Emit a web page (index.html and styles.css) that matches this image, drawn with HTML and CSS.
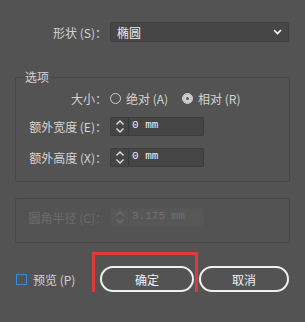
FILE: index.html
```html
<!DOCTYPE html>
<html lang="zh-CN">
<head>
    <meta charset="UTF-8">
    <title>椭圆选项</title>
    <link rel="stylesheet" href="styles.css">
</head>
<body>
<div class="dialog">
    <div class="row shape-row">
        <label class="lbl">形状 (S)：</label>
        <div class="select">
            <span>椭圆</span>
            <svg width="9" height="6" viewBox="0 0 9 6"><path d="M1 1l3.5 3.5L8 1" stroke="#fff" stroke-width="1.6" fill="none"/></svg>
        </div>
    </div>

    <fieldset class="group">
        <legend>选项</legend>
        <div class="row radio-row">
            <span class="lbl">大小：</span>
            <span class="radio"></span><span class="opt">绝对 (A)</span>
            <span class="radio on"></span><span class="opt">相对 (R)</span>
        </div>
        <div class="row field-row">
            <span class="lbl">额外宽度 (E)：</span>
            <div class="num">
                <span class="spin"><svg width="10" height="17" viewBox="0 0 10 17"><path d="M1.5 6.5L5 3l3.5 3.5M1.5 10.5L5 14l3.5-3.5" stroke="#e6e6e6" stroke-width="1.3" fill="none"/></svg></span>
                <span class="val">0 mm</span>
            </div>
        </div>
        <div class="row field-row second">
            <span class="lbl">额外高度 (X)：</span>
            <div class="num">
                <span class="spin"><svg width="10" height="17" viewBox="0 0 10 17"><path d="M1.5 6.5L5 3l3.5 3.5M1.5 10.5L5 14l3.5-3.5" stroke="#e6e6e6" stroke-width="1.3" fill="none"/></svg></span>
                <span class="val">0 mm</span>
            </div>
        </div>
    </fieldset>

    <fieldset class="group disabled">
        <div class="row field-row">
            <span class="lbl">圆角半径 (C)：</span>
            <div class="num">
                <span class="spin"><svg width="10" height="17" viewBox="0 0 10 17"><path d="M1.5 6.5L5 3l3.5 3.5M1.5 10.5L5 14l3.5-3.5" stroke="#6c6c6c" stroke-width="1.3" fill="none"/></svg></span>
                <span class="val">3.175 mm</span>
            </div>
        </div>
    </fieldset>

    <div class="row footer">
        <label class="check"><span class="box"></span>预览 (P)</label>
        <div class="ok-wrap">
            <button class="btn ok">确定</button>
            <span class="mark"></span>
        </div>
        <button class="btn cancel">取消</button>
    </div>
</div>
</body>
</html>
```

FILE: styles.css
```css
body {
    margin: 0;
    background: #535353;
    font-family: "Noto Sans CJK SC", sans-serif;
    font-size: 12px;
    color: #d4d4d4;
}

.dialog {
    width: 275px;
    padding: 22px 15px 0 15px;
}

.row {
    display: flex;
    align-items: center;
}

.lbl {
    box-sizing: border-box;
    width: 94px;
    padding-right: 3px;
    text-align: right;
    white-space: nowrap;
}

.shape-row {
    height: 20px;
}
.shape-row .lbl {
    width: 95px;
}

.select {
    box-sizing: border-box;
    width: 179px;
    height: 20px;
    display: flex;
    align-items: center;
    justify-content: space-between;
    padding: 0 6px 0 6px;
    background: #464646;
    border: 1px solid #3f3f3f;
    border-radius: 2px;
    color: #ececec;
}

.group {
    margin: 27px 0 0 0;
    padding: 3px 0 14px 0;
    border: 1px solid #474747;
    border-radius: 2px;
    min-width: 0;
}
.group legend {
    margin-left: 8px;
    padding: 0 1px;
    line-height: 16px;
}

.radio-row {
    height: 20px;
}
.radio {
    box-sizing: border-box;
    width: 11px;
    height: 11px;
    border: 1px solid #cfcfcf;
    border-radius: 50%;
    margin-right: 5px;
}
.radio.on {
    margin-left: 14px;
    background: #cfcfcf;
    border-color: #cfcfcf;
    box-shadow: inset 0 0 0 3px #cfcfcf, inset 0 0 0 6px #5a5a5a;
}
.opt {
    white-space: nowrap;
}

.field-row {
    height: 19px;
    margin-top: 9px;
}
.field-row.second {
    margin-top: 12px;
}

.num {
    box-sizing: border-box;
    display: flex;
    width: 94px;
    height: 19px;
    background: #454545;
    border: 1px solid #3d3d3d;
    border-radius: 2px;
}
.spin {
    width: 17px;
    display: flex;
    align-items: center;
    justify-content: center;
    border-right: 1px solid #393939;
}
.val {
    padding-left: 3px;
    font-family: "Liberation Mono", monospace;
    font-size: 11px;
    line-height: 15px;
    color: #f0f0f0;
}

.group.disabled {
    margin-top: 16px;
    padding: 9px 0 15px 0;
}
.disabled .field-row {
    margin-top: 0;
}
.disabled .lbl {
    color: #6c6c6c;
}
.disabled .num {
    background: #575757;
    border-color: #555555;
}
.disabled .spin {
    border-right-color: #525252;
}
.disabled .val {
    color: #727272;
}

.footer {
    height: 26px;
    margin-top: 23px;
}
.check {
    box-sizing: border-box;
    width: 85px;
    display: flex;
    align-items: center;
    gap: 6px;
    padding-left: 1px;
    white-space: nowrap;
}
.box {
    box-sizing: border-box;
    width: 11px;
    height: 11px;
    border: 1.5px solid #3f8ad6;
}

.btn {
    box-sizing: border-box;
    height: 26px;
    padding: 0;
    border: 2px solid #f0f0f0;
    border-radius: 13px;
    background: transparent;
    color: #f0f0f0;
    font: inherit;
}
.ok {
    width: 94px;
}
.cancel {
    width: 90px;
    margin-left: 5px;
}

.ok-wrap {
    position: relative;
    display: flex;
}
.mark {
    position: absolute;
    left: -8px;
    top: -14px;
    right: -4px;
    bottom: -13px;
    border: 3px solid #e0393c;
    pointer-events: none;
}
```
